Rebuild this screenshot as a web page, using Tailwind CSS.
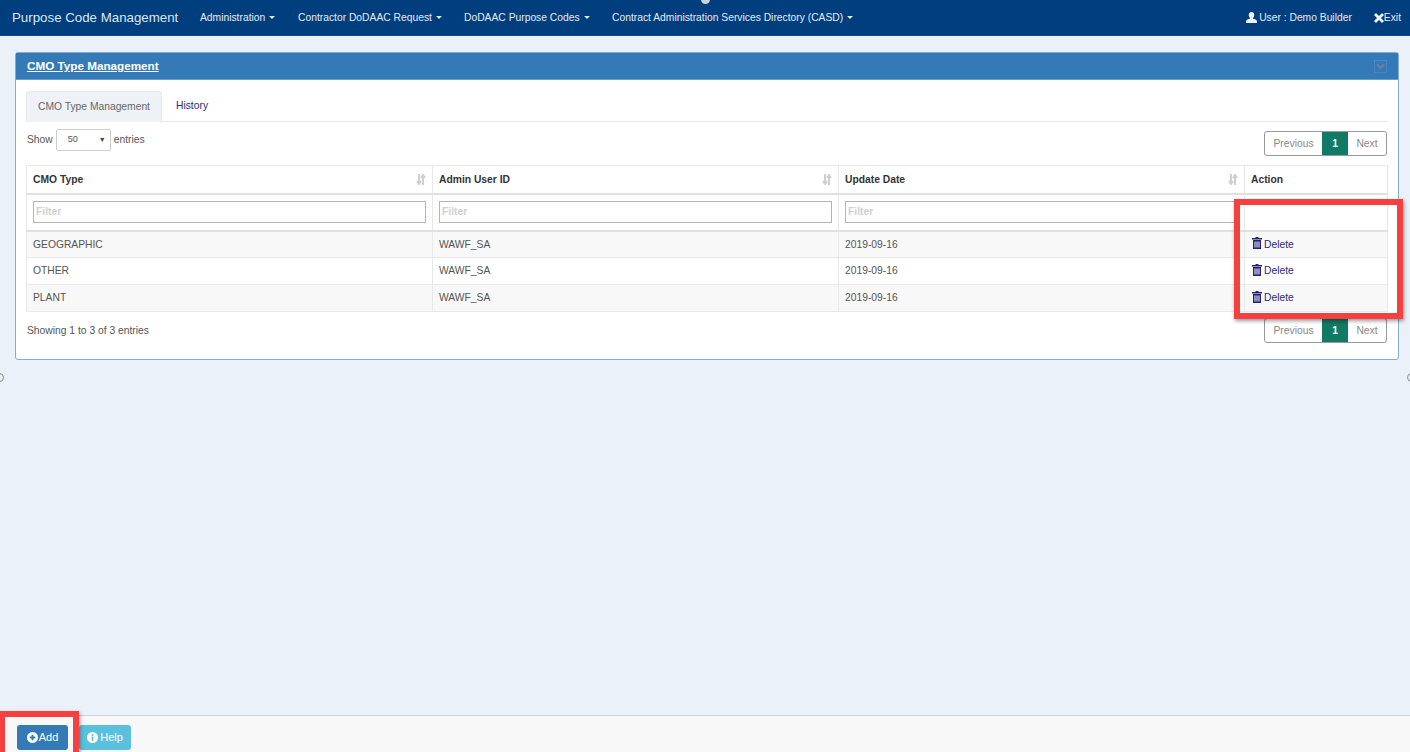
<!DOCTYPE html>
<html>
<head>
<meta charset="utf-8">
<script src="https://cdn.jsdelivr.net/npm/@tailwindcss/browser@4"></script>
</head>
<body class="bg-[#eaf1f8] font-['Liberation_Sans',Arial,sans-serif] text-[10.3px] text-[#555]">
<div class="relative w-[1410px] h-[752px] overflow-hidden flex flex-col">
  <!-- Navbar -->
  <nav class="h-[36px] shrink-0 bg-[#003e7e] border-b border-[#0b4f8a] flex items-center pl-[12px] pr-[9px] text-[#e4ecf5] text-[10.3px]">
    <span class="text-[13.3px] w-[188px] text-[#dde7f2]">Purpose Code Management</span>
    <span class="flex items-center gap-[4px] w-[98px]">Administration <i class="w-0 h-0 border-x-[3px] border-x-transparent border-t-[3px] border-t-[#e4ecf5]"></i></span>
    <span class="flex items-center gap-[4px] w-[166px]">Contractor DoDAAC Request <i class="w-0 h-0 border-x-[3px] border-x-transparent border-t-[3px] border-t-[#e4ecf5]"></i></span>
    <span class="flex items-center gap-[4px] w-[148px]">DoDAAC Purpose Codes <i class="w-0 h-0 border-x-[3px] border-x-transparent border-t-[3px] border-t-[#e4ecf5]"></i></span>
    <span class="flex items-center gap-[4px]">Contract Administration Services Directory (CASD) <i class="w-0 h-0 border-x-[3px] border-x-transparent border-t-[3px] border-t-[#e4ecf5]"></i></span>
    <span class="ml-auto flex items-center gap-[2px]">
      <svg class="w-[11px] h-[11px]" viewBox="0 0 12 12" fill="#eef3f9"><path d="M6 0c1.900 0 3 1.400 3 3.200 0 1.300-.6 2.500-1.300 3.100v1c1.600.5 4.300 1 4.300 2.700V12H0v-2c0-1.700 2.700-2.200 4.300-2.700v-1C3.600 5.700 3 4.500 3 3.200 3 1.400 4.100 0 6 0z"/></svg>
      User : Demo Builder
    </span>
    <span class="ml-[22px] flex items-center">
      <svg class="w-[10px] h-[10px]" viewBox="0 0 10 10" stroke="#f2f5f9" stroke-width="2.800"><path d="M1 1l8 8M9 1l-8 8"/></svg>Exit
    </span>
  </nav>

  <!-- Main -->
  <main class="flex-1 pt-[16px] pl-[15px] pr-[11px]">
    <section class="h-[308px] bg-white border border-[#7fadd6] rounded-[3px] flex flex-col">
      <header class="h-[27px] shrink-0 bg-[#337ab7] flex items-center justify-between pl-[11px] pr-[11px] border-b border-[#6b9fcd]">
        <a class="text-white font-bold text-[11.700px] underline">CMO Type Management</a>
        <span class="w-[13px] h-[13px] border border-[#4a86c8] flex items-center justify-center">
          <svg class="w-[9px] h-[7px]" viewBox="0 0 10 7" fill="none" stroke="#6f8197" stroke-width="2.400"><path d="M1 1l4 4 4-4"/></svg>
        </span>
      </header>
      <div class="flex-1 px-[10px] pt-[11px] flex flex-col">
        <!-- Tabs -->
        <div class="flex h-[31px] border-b border-[#e6e6e6] shrink-0">
          <span class="h-[31px] w-[136px] ml-[0px] justify-center bg-[#eef2f7] border border-[#e6e9ee] border-b-0 rounded-t-[3px] flex items-center text-[#666]">CMO Type Management</span>
          <span class="pl-[14px] flex items-center text-[#2b2a78]">History</span>
        </div>
        <!-- Length + pager -->
        <div class="h-[43px] shrink-0 flex justify-between items-start">
          <div class="flex items-center gap-[3px] pt-[7px] pl-[1px]">
            Show
            <span class="w-[55px] h-[22px] border border-[#ccc] rounded-[2px] flex items-center justify-between pl-[11px] pr-[4px] text-[9px]">50 <i class="not-italic text-[7px] text-[#444]">▼</i></span>
            entries
          </div>
          <div class="mt-[9px] h-[25px] flex border border-[#999] rounded-[3px] mr-[1px] text-[#888] overflow-hidden">
            <span class="w-[57px] flex items-center justify-center">Previous</span>
            <span class="w-[26px] flex items-center justify-center bg-[#117a65] text-white font-bold">1</span>
            <span class="w-[38px] flex items-center justify-center">Next</span>
          </div>
        </div>
        <!-- Table -->
        <table class="w-[1361px] table-fixed border-collapse border border-[#e8e8e8] text-left">
          <colgroup><col class="w-[406px]"><col class="w-[406px]"><col class="w-[406px]"><col class="w-[143px]"></colgroup>
          <thead>
            <tr class="h-[28px] border-b-2 border-[#e0e0e0] text-[#333]">
              <th class="px-[6px] border-r border-[#e8e8e8]"><div class="flex justify-between items-center">CMO Type <svg class="w-[10px] h-[11px]" viewBox="0 0 10 11" fill="none" stroke="#cfcfcf" stroke-width="2"><path d="M3 0v9M1 7l2 3 2-3M7 11V2M5 4l2-3 2 3"/></svg></div></th>
              <th class="px-[6px] border-r border-[#e8e8e8]"><div class="flex justify-between items-center">Admin User ID <svg class="w-[10px] h-[11px]" viewBox="0 0 10 11" fill="none" stroke="#cfcfcf" stroke-width="2"><path d="M3 0v9M1 7l2 3 2-3M7 11V2M5 4l2-3 2 3"/></svg></div></th>
              <th class="px-[6px] border-r border-[#e8e8e8]"><div class="flex justify-between items-center">Update Date <svg class="w-[10px] h-[11px]" viewBox="0 0 10 11" fill="none" stroke="#cfcfcf" stroke-width="2"><path d="M3 0v9M1 7l2 3 2-3M7 11V2M5 4l2-3 2 3"/></svg></div></th>
              <th class="px-[6px]">Action</th>
            </tr>
            <tr class="h-[37px] border-b-2 border-[#e0e0e0]">
              <td class="px-[6px] border-r border-[#e8e8e8]"><div class="h-[22px] border border-[#b5b5b5] pl-[2px] flex items-center text-[#d0d0d0] font-bold">Filter</div></td>
              <td class="px-[6px] border-r border-[#e8e8e8]"><div class="h-[22px] border border-[#b5b5b5] pl-[2px] flex items-center text-[#d0d0d0] font-bold">Filter</div></td>
              <td class="px-[6px] border-r border-[#e8e8e8]"><div class="h-[22px] border border-[#b5b5b5] pl-[2px] flex items-center text-[#d0d0d0] font-bold">Filter</div></td>
              <td></td>
            </tr>
          </thead>
          <tbody>
            <tr class="h-[27px] bg-[#f8f8f8] border-b border-[#e8e8e8]">
              <td class="px-[6px] border-r border-[#e8e8e8]">GEOGRAPHIC</td><td class="px-[6px] border-r border-[#e8e8e8]">WAWF_SA</td><td class="px-[6px] border-r border-[#e8e8e8]">2019-09-16</td>
              <td class="px-[7px]"><span class="flex items-center gap-[2px] text-[#2b2a78]"><svg class="w-[10px] h-[12px] mb-[2px]" viewBox="0 0 10 12" fill="#22227a"><path d="M3.500 0h3v1H10v1.500H0V1h3.500zM1 3h8v9H1zM2.500 4.500v6h1v-6zM4.500 4.500v6h1v-6zM6.500 4.500v6h1v-6z" fill-rule="evenodd"/></svg>Delete</span></td>
            </tr>
            <tr class="h-[27px] bg-white border-b border-[#e8e8e8]">
              <td class="px-[6px] border-r border-[#e8e8e8]">OTHER</td><td class="px-[6px] border-r border-[#e8e8e8]">WAWF_SA</td><td class="px-[6px] border-r border-[#e8e8e8]">2019-09-16</td>
              <td class="px-[7px]"><span class="flex items-center gap-[2px] text-[#2b2a78]"><svg class="w-[10px] h-[12px] mb-[2px]" viewBox="0 0 10 12" fill="#22227a"><path d="M3.500 0h3v1H10v1.500H0V1h3.500zM1 3h8v9H1zM2.500 4.500v6h1v-6zM4.500 4.500v6h1v-6zM6.500 4.500v6h1v-6z" fill-rule="evenodd"/></svg>Delete</span></td>
            </tr>
            <tr class="h-[27px] bg-[#f8f8f8] border-b border-[#e8e8e8]">
              <td class="px-[6px] border-r border-[#e8e8e8]">PLANT</td><td class="px-[6px] border-r border-[#e8e8e8]">WAWF_SA</td><td class="px-[6px] border-r border-[#e8e8e8]">2019-09-16</td>
              <td class="px-[7px]"><span class="flex items-center gap-[2px] text-[#2b2a78]"><svg class="w-[10px] h-[12px] mb-[2px]" viewBox="0 0 10 12" fill="#22227a"><path d="M3.500 0h3v1H10v1.500H0V1h3.500zM1 3h8v9H1zM2.500 4.500v6h1v-6zM4.500 4.500v6h1v-6zM6.500 4.500v6h1v-6z" fill-rule="evenodd"/></svg>Delete</span></td>
            </tr>
          </tbody>
        </table>
        <div class="flex justify-between items-start">
          <span class="pt-[11px] pl-[1px]">Showing 1 to 3 of 3 entries</span>
          <div class="mt-[6px] h-[25px] flex border border-[#999] rounded-[3px] mr-[1px] text-[#888] overflow-hidden">
            <span class="w-[57px] flex items-center justify-center">Previous</span>
            <span class="w-[26px] flex items-center justify-center bg-[#117a65] text-white font-bold">1</span>
            <span class="w-[38px] flex items-center justify-center">Next</span>
          </div>
        </div>
      </div>
    </section>
  </main>

  <!-- Footer -->
  <footer class="h-[37px] shrink-0 bg-[#f8f8f8] border-t border-[#cfd3d8] flex items-start pl-[17px] pt-[9px] gap-[11px]">
    <button class="w-[51px] h-[25px] bg-[#337ab7] rounded-[3px] text-white text-[11px] flex items-center justify-center gap-[1px]">
      <svg class="w-[11px] h-[11px]" viewBox="0 0 12 12"><circle cx="6" cy="6" r="6" fill="#fff"/><path d="M3 6h6M6 3v6" stroke="#337ab7" stroke-width="2"/></svg>Add
    </button>
    <button class="w-[52px] h-[25px] bg-[#5bc0de] rounded-[3px] text-white text-[11px] flex items-center justify-center gap-[2px]">
      <svg class="w-[11px] h-[11px]" viewBox="0 0 12 12"><circle cx="6" cy="6" r="6" fill="#fff"/><path d="M6 5v4.500" stroke="#5bc0de" stroke-width="2"/><circle cx="6" cy="3.200" r="1.100" fill="#5bc0de"/></svg>Help
    </button>
  </footer>

  <!-- Screenshot annotations -->
  <div class="absolute left-[1234px] top-[199px] w-[169px] h-[120px] border-[6px] border-[#f4403f] shadow-[1px_2px_4px_rgba(0,0,0,0.4)]"></div>
  <div class="absolute left-[-1px] top-[711px] w-[80px] h-[50px] border-[6px] border-[#f4403f] shadow-[1px_2px_4px_rgba(0,0,0,0.4)]"></div>
  <div class="absolute left-[701px] top-[-5px] w-[9px] h-[9px] rounded-full bg-[#cfd3d8]"></div>
  <div class="absolute left-[-5px] top-[373px] w-[9px] h-[9px] rounded-full border border-[#888]"></div>
  <div class="absolute left-[1407px] top-[373px] w-[9px] h-[9px] rounded-full border border-[#888]"></div>
</div>
</body>
</html>
